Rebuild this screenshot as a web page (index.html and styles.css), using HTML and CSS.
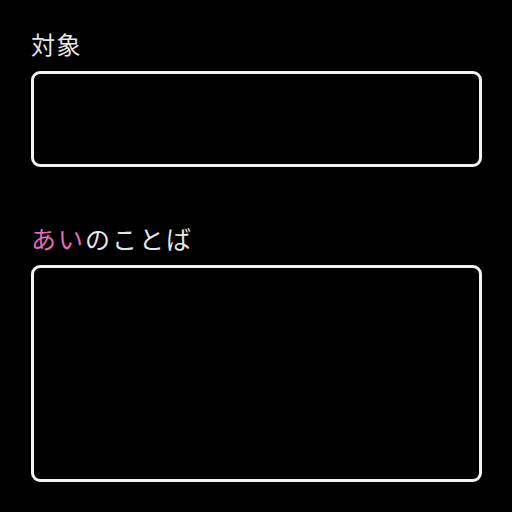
FILE: index.html
```html
<!DOCTYPE html>
<html lang="ja">
<head>
<meta charset="utf-8">
<link rel="stylesheet" href="styles.css">
</head>
<body>
<main class="form">
  <section class="field field-target">
    <label class="label">対象</label>
    <div class="box box-small"></div>
  </section>
  <section class="field field-message">
    <label class="label label-kana"><span class="pink">あい</span>のことば</label>
    <div class="box box-large"></div>
  </section>
</main>
</body>
</html>
```
FILE: styles.css
```css
html, body {
  margin: 0;
  padding: 0;
  background: #000;
}
body {
  width: 512px;
  height: 512px;
  overflow: hidden;
  font-family: "Noto Sans CJK JP", "Noto Sans", sans-serif;
  color: #e6e6e6;
}
.form {
  display: flex;
  flex-direction: column;
  padding: 27px 30px 0 31px;
}
.field {
  display: flex;
  flex-direction: column;
}
.field-message {
  margin-top: 54px;
}
.label {
  font-size: 24px;
  line-height: 34px;
  height: 34px;
  margin-bottom: 10px;
  letter-spacing: 1.5px;
}
.label-kana {
  font-size: 25px;
  letter-spacing: 2px;
}
.pink {
  color: #e46cbe;
}
.box {
  box-sizing: border-box;
  border: 3px solid #f2f2f2;
  border-radius: 9px;
  width: 451px;
}
.box-small {
  height: 96px;
}
.box-large {
  height: 217px;
}
```
